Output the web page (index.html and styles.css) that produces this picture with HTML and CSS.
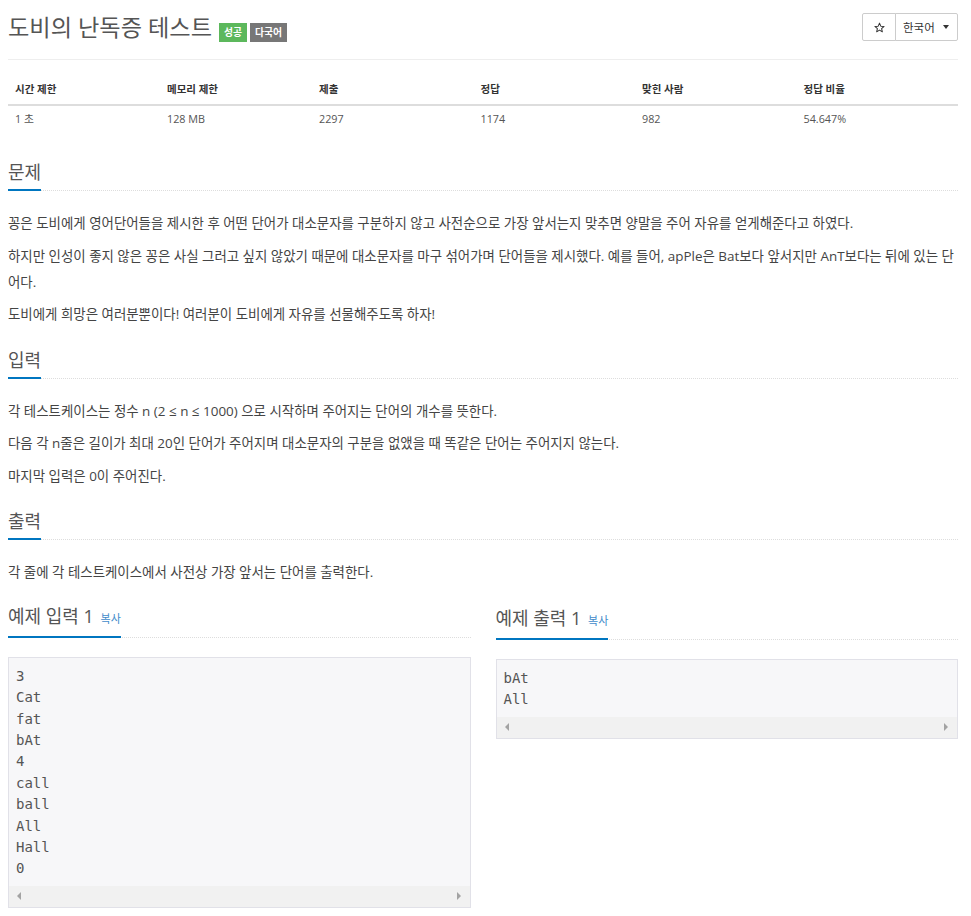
FILE: index.html
```html
<!DOCTYPE html>
<html lang="ko">
<head>
<meta charset="utf-8">
<title>도비의 난독증 테스트</title>
<link rel="stylesheet" href="styles.css">
</head>
<body>
<div class="page">
  <header class="page-header">
    <h1 class="title">
      <span class="title-text">도비의 난독증 테스트</span>
      <span class="labels">
        <span class="label label-success">성공</span>
        <span class="label label-default">다국어</span>
      </span>
    </h1>
    <div class="btn-group">
      <button class="btn btn-star" type="button">
        <svg width="11" height="11" viewBox="0 0 24 24"><path d="M12 2.5l2.9 6.6 7.1.6-5.4 4.7 1.6 7-6.2-3.7-6.2 3.7 1.6-7L2 9.7l7.1-.6z" fill="none" stroke="#333" stroke-width="2.2" stroke-linejoin="round"/></svg>
      </button>
      <button class="btn btn-lang" type="button">한국어 <span class="caret"></span></button>
    </div>
  </header>

  <table class="info-table">
    <thead>
      <tr>
        <th class="c16">시간 제한</th>
        <th class="c16">메모리 제한</th>
        <th class="c17">제출</th>
        <th class="c17">정답</th>
        <th class="c17">맞힌 사람</th>
        <th class="c17">정답 비율</th>
      </tr>
    </thead>
    <tbody>
      <tr>
        <td>1 초</td>
        <td>128 MB</td>
        <td>2297</td>
        <td>1174</td>
        <td>982</td>
        <td>54.647%</td>
      </tr>
    </tbody>
  </table>

  <section class="section">
    <div class="headline"><h2>문제</h2></div>
    <div class="problem-text">
      <p>꽁은 도비에게 영어단어들을 제시한 후 어떤 단어가 대소문자를 구분하지 않고 사전순으로 가장 앞서는지 맞추면 양말을 주어 자유를 얻게해준다고 하였다.</p>
      <p>하지만 인성이 좋지 않은 꽁은 사실 그러고 싶지 않았기 때문에 대소문자를 마구 섞어가며 단어들을 제시했다. 예를 들어, apPle은 Bat보다 앞서지만 AnT보다는 뒤에 있는 단어다.</p>
      <p>도비에게 희망은 여러분뿐이다! 여러분이 도비에게 자유를 선물해주도록 하자!</p>
    </div>
  </section>

  <section class="section">
    <div class="headline"><h2>입력</h2></div>
    <div class="problem-text">
      <p>각 테스트케이스는 정수 n (2 ≤ n ≤ 1000) 으로 시작하며 주어지는 단어의 개수를 뜻한다.</p>
      <p>다음 각 n줄은 길이가 최대 20인 단어가 주어지며 대소문자의 구분을 없앴을 때 똑같은 단어는 주어지지 않는다.</p>
      <p>마지막 입력은 0이 주어진다.</p>
    </div>
  </section>

  <section class="section">
    <div class="headline"><h2>출력</h2></div>
    <div class="problem-text">
      <p>각 줄에 각 테스트케이스에서 사전상 가장 앞서는 단어를 출력한다.</p>
    </div>
  </section>

  <div class="samples">
    <section class="section sample">
      <div class="headline sample-head"><h2>예제 입력 1 <a class="copy" href="#">복사</a></h2></div>
      <div class="sample-box">
        <pre class="sample-data">3
Cat
fat
bAt
4
call
ball
All
Hall
0</pre>
        <div class="hscroll"><span class="arrow arrow-left"></span><span class="arrow arrow-right"></span></div>
      </div>
    </section>
    <section class="section sample">
      <div class="headline sample-head"><h2>예제 출력 1 <a class="copy" href="#">복사</a></h2></div>
      <div class="sample-box">
        <pre class="sample-data">bAt
All</pre>
        <div class="hscroll"><span class="arrow arrow-left"></span><span class="arrow arrow-right"></span></div>
      </div>
    </section>
  </div>
</div>
</body>
</html>
```
FILE: styles.css
```css
* { box-sizing: border-box; }

body {
  margin: 8px 13px 8px 8px;
  background: #fff;
  color: #444;
  font-family: "Open Sans", "Noto Sans CJK KR", sans-serif;
}

.page { width: 950px; }

/* header */
.page-header {
  display: flex;
  align-items: center;
  justify-content: space-between;
  padding: 4px 0 17px;
  border-bottom: 1px solid #eee;
}

.title {
  margin: 0;
  display: flex;
  align-items: center;
  font-size: 23.2px;
  line-height: 28px;
  font-weight: normal;
  color: #555;
}

.labels {
  display: flex;
  gap: 3px;
  margin-left: 7px;
  margin-top: 11px;
}

.label {
  display: inline-block;
  height: 19px;
  line-height: 19px;
  padding: 0 5px;
  font-size: 9.8px;
  font-weight: bold;
  color: #fff;
}

.label-success { background: #5cb85c; }
.label-default { background: #777; }

.btn-group { display: flex; }

.btn {
  height: 28px;
  margin: 0;
  border: 1px solid #ccc;
  background: #fff;
  font-family: inherit;
  font-size: 11.5px;
  color: #333;
  display: flex;
  align-items: center;
  cursor: pointer;
}

.btn-star {
  width: 34px;
  justify-content: center;
  padding: 0;
  border-radius: 2px 0 0 2px;
}

.btn-lang {
  width: 63px;
  margin-left: -1px;
  padding: 0 8px 0 7px;
  justify-content: space-between;
  border-radius: 0 2px 2px 0;
}

.caret {
  width: 0;
  height: 0;
  border-top: 4px solid #333;
  border-left: 3.5px solid transparent;
  border-right: 3.5px solid transparent;
}

/* table */
.info-table {
  width: 100%;
  border-collapse: collapse;
  margin: 14px 0 13px;
  font-size: 10.8px;
}

.info-table th {
  text-align: left;
  font-size: 10.5px;
  font-weight: bold;
  color: #333;
  line-height: 16px;
  padding: 7px 7px;
  border-bottom: 2px solid #ddd;
}

.info-table td {
  color: #555;
  line-height: 16px;
  padding: 5px 7px 7px;
}

.c16 { width: 16%; }
.c17 { width: 17%; }

/* sections */
.section { display: flow-root; }

.headline {
  margin: 13px 0 19px;
  border-bottom: 1px dotted #ddd;
}

.section + .section .headline { margin-top: 14px; }

.headline h2 {
  display: inline-block;
  margin: 0 0 -1px;
  padding-bottom: 5px;
  border-bottom: 2px solid #0076c0;
  font-size: 18px;
  line-height: 24px;
  font-weight: normal;
  color: #555;
}

.copy {
  font-size: 11px;
  color: #428bca;
  text-decoration: none;
  margin-left: 2px;
}

.problem-text p {
  margin: 0 0 6.25px;
  font-size: 13.45px;
  line-height: 26.25px;
  color: #444;
}

/* samples */
.samples {
  display: grid;
  grid-template-columns: 1fr 1fr;
  column-gap: 25px;
}

.samples .headline { margin-top: 12px; }

.sample-head { margin-bottom: 19px; }

.sample-box {
  border: 1px solid #e1e1e8;
  background: #f7f7f9;
}

.sample-data {
  margin: 0;
  padding: 8px 7px 6px;
  font-family: "DejaVu Sans Mono", monospace;
  font-size: 14px;
  line-height: 21.4px;
  color: #555;
}

.hscroll {
  height: 21px;
  background: #f1f1f1;
  display: flex;
  align-items: center;
  justify-content: space-between;
  padding: 0 9px 0 8px;
}

.arrow {
  width: 0;
  height: 0;
  border-top: 4px solid transparent;
  border-bottom: 4px solid transparent;
}

.arrow-left { border-right: 4px solid #a3a3a3; }
.arrow-right { border-left: 4px solid #a3a3a3; }
```
